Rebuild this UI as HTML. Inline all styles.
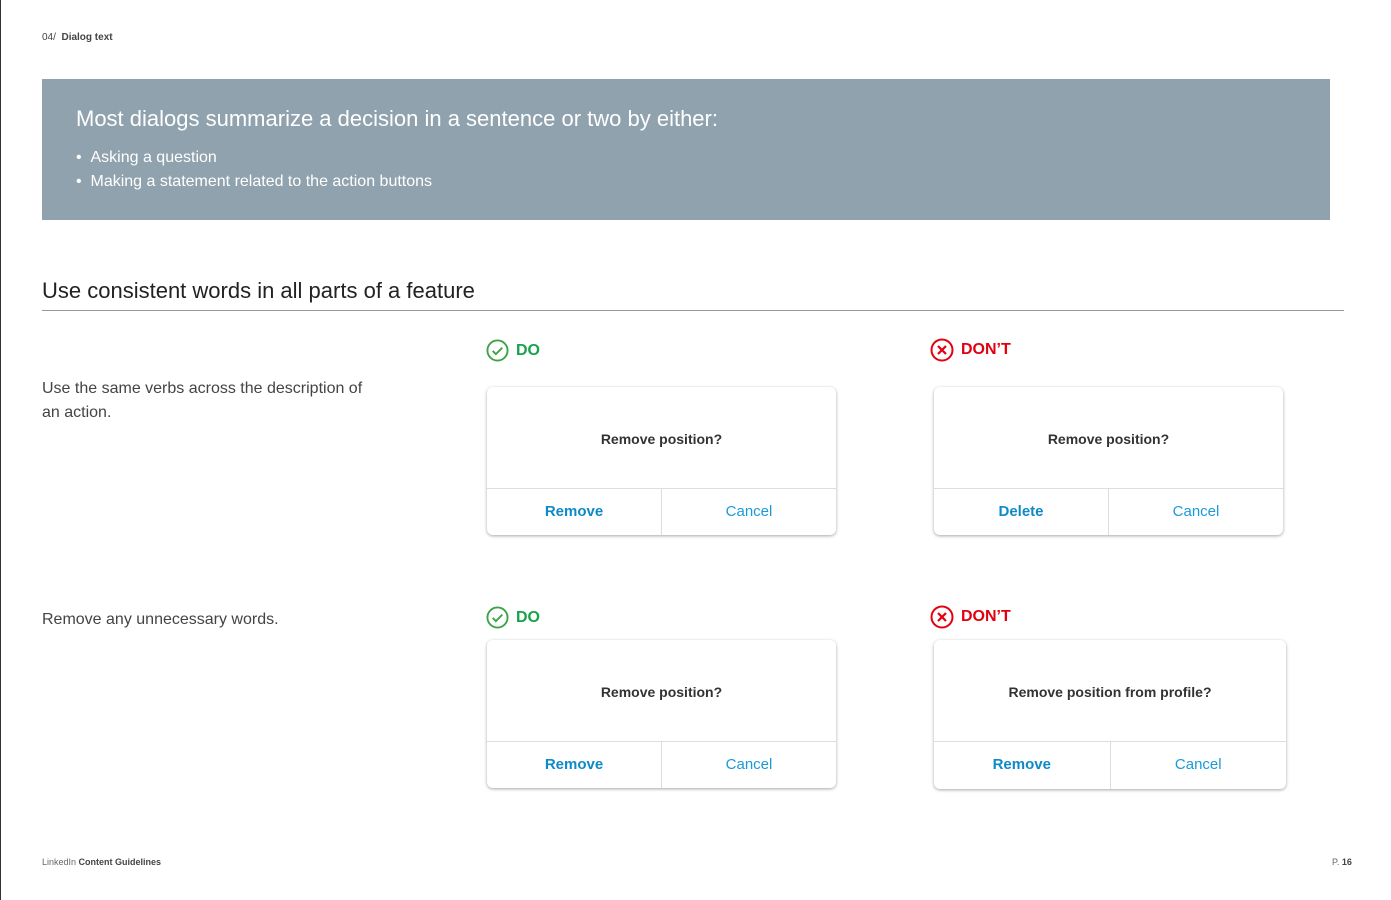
<!DOCTYPE html>
<html><head><style>
body{margin:0;width:1391px;height:900px;background:#fff;font-family:"Liberation Sans",sans-serif;position:relative;overflow:hidden}
.a{position:absolute}
.card{position:absolute;background:#fff;border-radius:6px;box-shadow:0 1px 3px rgba(0,0,0,.35);overflow:hidden}
.card .q{position:absolute;left:0;right:0;top:1px;height:101px;line-height:102px;text-align:center;font-size:14px;font-weight:bold;color:#333}
.card .bar{position:absolute;left:0;right:0;top:101px;bottom:0;border-top:1px solid #ddd;display:flex}
.card .bar div{flex:1;text-align:center;line-height:46px;font-size:15px;color:#1a9bd7}
.card .bar div:first-child{border-right:1px solid #ddd;font-weight:bold;color:#0e8ac8}
.lbl{position:absolute;font-weight:bold;font-size:16px;display:flex;align-items:center;gap:7px}
</style></head><body>
<div class="a" style="left:0;top:0;width:1px;height:900px;background:#333"></div>
<div class="a" style="left:42px;top:32px;font-size:10px;color:#444">04/&nbsp; <b>Dialog text</b></div>
<div class="a" style="left:42px;top:79px;width:1288px;height:141px;background:#8fa2ad;color:#fff">
<div class="a" style="left:34px;top:27px;font-size:22px">Most dialogs summarize a decision in a sentence or two by either:</div>
<div class="a" style="left:34px;top:67px;font-size:16px;line-height:24px">• &nbsp;Asking a question<br>• &nbsp;Making a statement related to the action buttons</div>
</div>
<div class="a" style="left:42px;top:278px;font-size:22px;color:#222">Use consistent words in all parts of a feature</div>
<div class="a" style="left:42px;top:310px;width:1302px;height:1px;background:#999"></div>
<div class="a" style="left:42px;top:377px;font-size:16px;color:#444;line-height:24px">Use the same verbs across the description of<br>an action.</div>
<div class="a" style="left:42px;top:608px;font-size:16px;color:#444;line-height:24px">Remove any unnecessary words.</div>

<div class="lbl" style="left:486px;top:339px;color:#17a34a"><svg width="23" height="23" viewBox="0 0 24 24"><circle cx="12" cy="12" r="10.5" fill="none" stroke="#3da345" stroke-width="2"/><path d="M7 12.5l3.3 3.3L17 9" fill="none" stroke="#3da345" stroke-width="2"/></svg>DO</div>
<div class="lbl" style="left:930px;top:338px;color:#e3000f"><svg width="24" height="24" viewBox="0 0 24 24"><circle cx="12" cy="12" r="10.5" fill="none" stroke="#e3000f" stroke-width="2"/><path d="M8 8l8 8M16 8l-8 8" stroke="#e3000f" stroke-width="2.2"/></svg>DON’T</div>
<div class="lbl" style="left:486px;top:606px;color:#17a34a"><svg width="23" height="23" viewBox="0 0 24 24"><circle cx="12" cy="12" r="10.5" fill="none" stroke="#3da345" stroke-width="2"/><path d="M7 12.5l3.3 3.3L17 9" fill="none" stroke="#3da345" stroke-width="2"/></svg>DO</div>
<div class="lbl" style="left:930px;top:605px;color:#e3000f"><svg width="24" height="24" viewBox="0 0 24 24"><circle cx="12" cy="12" r="10.5" fill="none" stroke="#e3000f" stroke-width="2"/><path d="M8 8l8 8M16 8l-8 8" stroke="#e3000f" stroke-width="2.2"/></svg>DON’T</div>

<div class="card" style="left:487px;top:387px;width:349px;height:148px"><div class="q">Remove position?</div><div class="bar"><div>Remove</div><div>Cancel</div></div></div>
<div class="card" style="left:934px;top:387px;width:349px;height:148px"><div class="q">Remove position?</div><div class="bar"><div>Delete</div><div>Cancel</div></div></div>
<div class="card" style="left:487px;top:640px;width:349px;height:148px"><div class="q">Remove position?</div><div class="bar"><div>Remove</div><div>Cancel</div></div></div>
<div class="card" style="left:934px;top:640px;width:352px;height:149px"><div class="q">Remove position from profile?</div><div class="bar"><div>Remove</div><div>Cancel</div></div></div>

<div class="a" style="left:42px;top:857px;font-size:9px;color:#666">LinkedIn <b style="color:#444">Content Guidelines</b></div>
<div class="a" style="left:1332px;top:857px;font-size:9px;color:#666">P. <b style="color:#444">16</b></div>
</body></html>
